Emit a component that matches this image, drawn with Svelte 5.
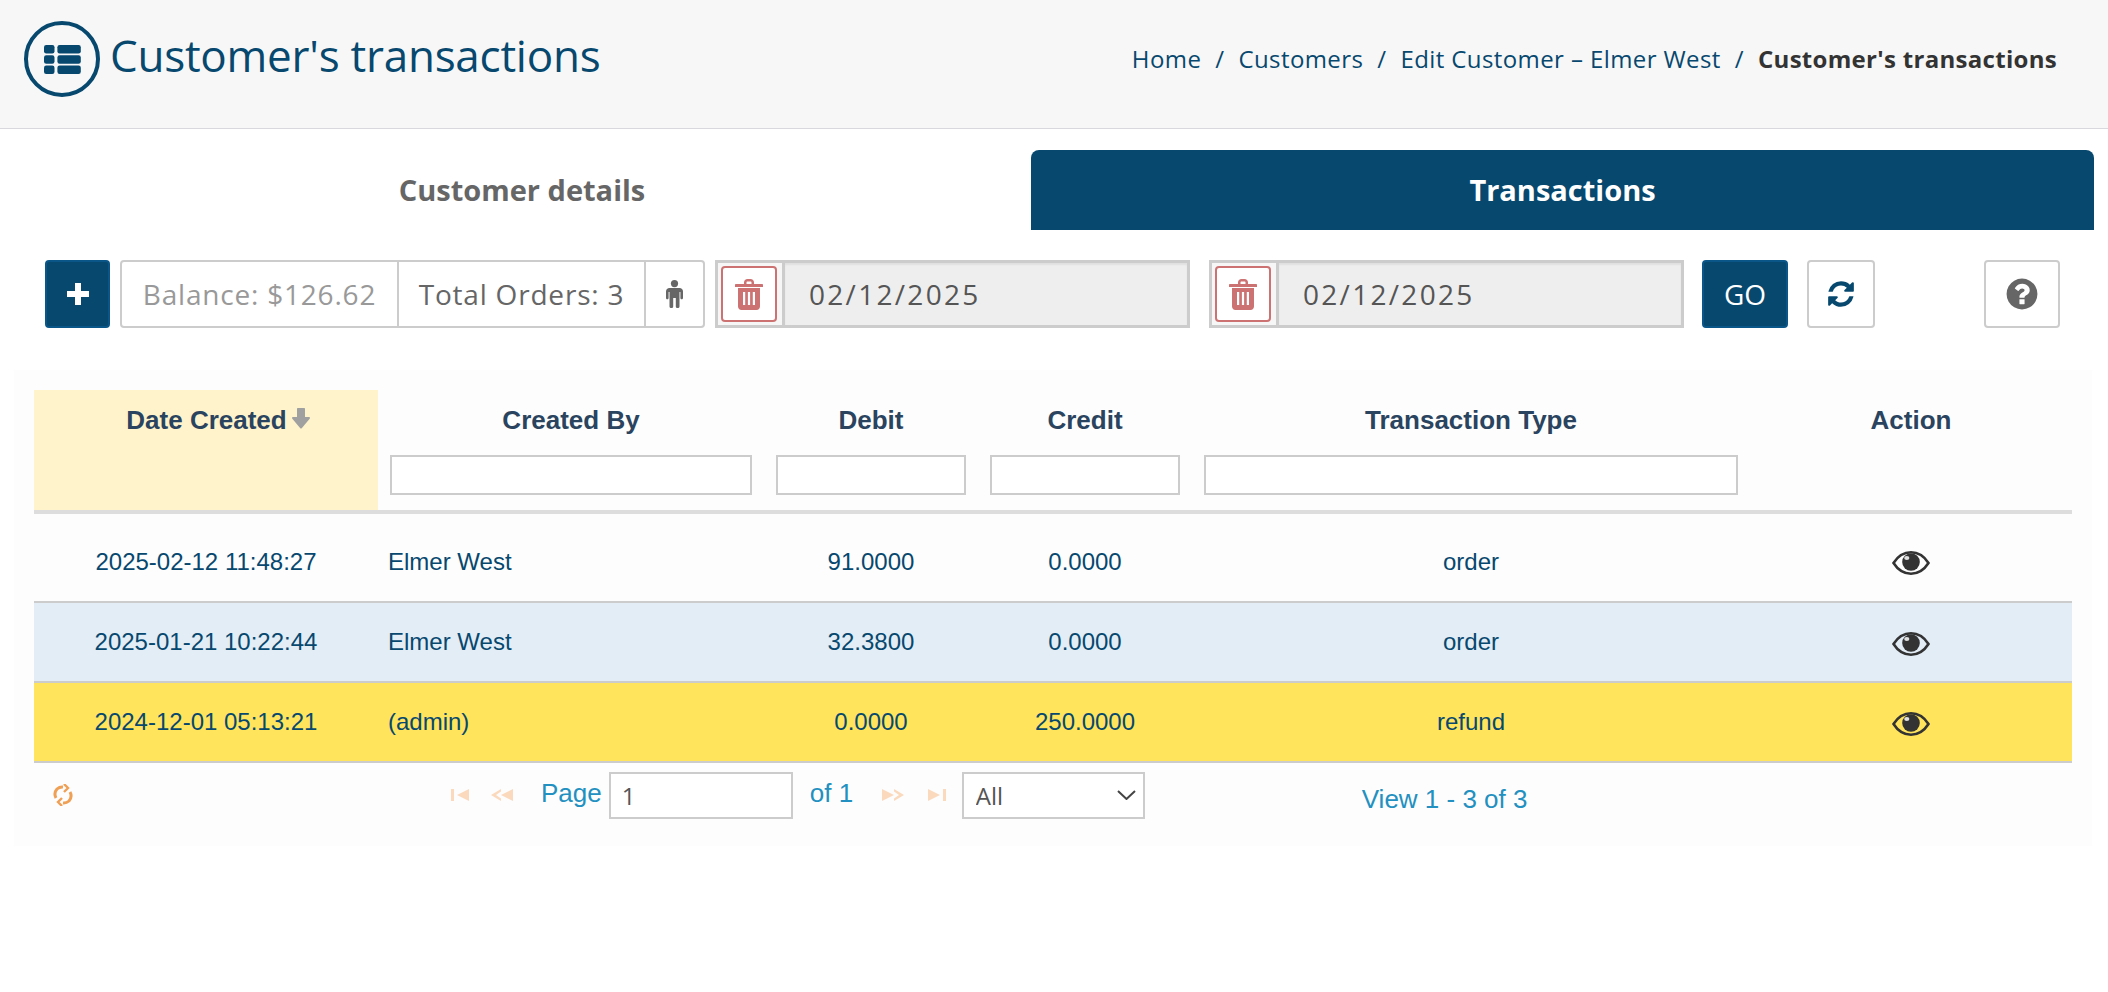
<script>
  const rows = [
    { date: '2025-02-12 11:48:27', by: 'Elmer West', debit: '91.0000', credit: '0.0000', type: 'order', cls: 'first' },
    { date: '2025-01-21 10:22:44', by: 'Elmer West', debit: '32.3800', credit: '0.0000', type: 'order', cls: 'blue' },
    { date: '2024-12-01 05:13:21', by: '(admin)', debit: '0.0000', credit: '250.0000', type: 'refund', cls: 'yellow' }
  ];
  const refresh = 'M1639 1056q0 5-1 7-64 268-268 434.5t-478 166.5q-146 0-282.5-55t-243.5-157l-129 129q-19 19-45 19t-45-19-19-45v-448q0-26 19-45t45-19h448q26 0 45 19t19 45-19 45l-137 137q71 66 161 102t187 36q134 0 250-65t186-179q11-17 53-117 8-23 30-23h192q13 0 22.500 9.500t9.500 22.500zm25-800v448q0 26-19 45t-45 19h-448q-26 0-45-19t-19-45 19-45l138-138q-148-137-349-137-134 0-250 65t-186 179q-11 17-53 117-8 23-30 23h-199q-13 0-22.500-9.500t-9.500-22.500v-7q65-268 270-434.500t480-166.500q146 0 284 55.500t245 156.500l130-129q19-19 45-19t45 19 19 45z';
  const help = 'M1024 1376v-192q0-14-9-23t-23-9h-192q-14 0-23 9t-9 23v192q0 14 9 23t23 9h192q14 0 23-9t9-23zm256-672q0-88-55.500-163t-138.500-116-170-41q-243 0-371 213-15 24 8 42l132 100q7 6 19 6 16 0 25-12 53-68 86-92 34-24 86-24 48 0 85.500 26t37.500 59q0 38-20 61t-68 45q-63 28-115.500 86.500t-52.500 125.500v36q0 14 9 23t23 9h192q14 0 23-9t9-23q0-19 21.500-49.500t54.500-49.500q32-18 49-28.500t46-35 44.500-48 28-60.500 12.500-81zm384 192q0 209-103 385.500t-279.500 279.500-385.500 103-385.500-103-279.500-279.500-103-385.500 103-385.500 279.500-279.500 385.500-103 385.500 103 279.500 279.500 103 385.500z';
</script>

{#snippet trash()}
  <button class="trash" aria-label="Clear date">
    <svg width="28" height="31" viewBox="0 0 28 31">
      <path class="red" fill-rule="evenodd" d="M9 5V3.500C9 1.500 10.500 0 12.500 0h3C17.500 0 19 1.500 19 3.500V5h8c.6 0 1 .4 1 1v2H0V6c0-.6.4-1 1-1zM11.500 5h5V3.500c0-.6-.4-1-1-1h-3c-.6 0-1 .4-1 1z"/>
      <path class="red" fill-rule="evenodd" d="M3 9h22v18.500c0 1.900-1.500 3.500-3.400 3.500H6.400C4.500 31 3 29.400 3 27.500zM8 13v13h2.200V13zM12.900 13v13h2.200V13zM17.800 13v13H20V13z"/>
    </svg>
  </button>
{/snippet}

{#snippet eye()}
  <svg width="38" height="24" viewBox="0 0 38 24" aria-label="View">
    <path d="M1.500 12C6 5 12 1.300 19 1.300S32 5 36.500 12C32 19 26 22.700 19 22.700S6 19 1.500 12Z" fill="none" stroke="#333" stroke-width="2.600"/>
    <circle cx="19" cy="11" r="8.800" fill="#333"/>
    <ellipse cx="14.800" cy="7" rx="2.600" ry="2" fill="#fff" opacity=".85"/>
  </svg>
{/snippet}

<header class="top">
  <div class="title">
    <span class="circle">
      <svg width="37" height="29" viewBox="0 0 37 29">
        <rect x="0" y="0" width="10.500" height="8.400" rx="2.200"/><rect x="13.400" y="0" width="23.400" height="8.400" rx="2.200"/>
        <rect x="0" y="10.300" width="10.500" height="8.400" rx="2.200"/><rect x="13.400" y="10.300" width="23.400" height="8.400" rx="2.200"/>
        <rect x="0" y="20.600" width="10.500" height="8.400" rx="2.200"/><rect x="13.400" y="20.600" width="23.400" height="8.400" rx="2.200"/>
      </svg>
    </span>
    <h1>Customer's transactions</h1>
  </div>
  <nav class="crumbs">
    <a href="#a">Home</a><span>/</span><a href="#b">Customers</a><span>/</span><a href="#c">Edit Customer – Elmer West</a><span>/</span><b>Customer's transactions</b>
  </nav>
</header>

<div class="tabs">
  <div class="tab">Customer details</div>
  <div class="tab active">Transactions</div>
</div>

<div class="toolbar">
  <button class="btn primary plus" aria-label="Add">
    <svg width="22" height="22" viewBox="0 0 22 22"><path d="M8 0h6v8h8v6h-8v8H8v-8H0V8h8z" fill="#fff"/></svg>
  </button>
  <div class="stats">
    <span class="balance">Balance: $126.62</span>
    <span class="orders">Total Orders: 3</span>
    <span class="person">
      <svg width="17" height="28" viewBox="0 0 17 28"><circle cx="8.500" cy="3.600" r="3.600" fill="#666"/><path d="M3.500 8h10C15.500 8 17 9.500 17 11.500v6.500c0 1.800-2.600 1.800-2.600 0v-6h-.9v14.500c0 2-3.700 2-3.700 0V18H7.200v8.500c0 2-3.700 2-3.700 0V12h-.9v6c0 1.800-2.600 1.800-2.600 0v-6.500C0 9.500 1.500 8 3.500 8z" fill="#666"/></svg>
    </span>
  </div>
  <div class="dategroup d1">
    <span class="trashcell">{@render trash()}</span>
    <input class="date" value="02/12/2025" readonly />
  </div>
  <div class="dategroup d2">
    <span class="trashcell">{@render trash()}</span>
    <input class="date" value="02/12/2025" readonly />
  </div>
  <button class="btn primary go">GO</button>
  <button class="btn plain refresh" aria-label="Refresh">
    <svg width="30" height="30" viewBox="0 0 1792 1792"><path d={refresh} fill="#07486f"/></svg>
  </button>
  <button class="btn plain help" aria-label="Help">
    <svg width="36" height="36" viewBox="0 0 1792 1792"><path d={help} fill="#666"/></svg>
  </button>
</div>

<section class="panel">
  <table>
    <colgroup>
      <col class="c1" /><col class="c2" /><col class="c3" /><col class="c3" /><col class="c5" /><col class="c6" />
    </colgroup>
    <thead>
      <tr>
        <th class="sorted">Date Created<svg class="sort" width="18" height="21" viewBox="0 0 18 21"><path d="M5 1c0-.6.4-1 1-1h6c.6 0 1 .4 1 1v8h4c1 0 1.300 1 .7 1.700l-8 9.500c-.4.500-1 .5-1.400 0l-8-9.500C-.3 10 0 9 1 9h4z" fill="#a0a0a0"/></svg></th>
        <th>Created By<input aria-label="Created By" /></th>
        <th>Debit<input aria-label="Debit" /></th>
        <th>Credit<input aria-label="Credit" /></th>
        <th>Transaction Type<input aria-label="Transaction Type" /></th>
        <th>Action</th>
      </tr>
    </thead>
    <tbody>
      {#each rows as r}
        <tr class={r.cls}>
          <td>{r.date}</td>
          <td class="left">{r.by}</td>
          <td>{r.debit}</td>
          <td>{r.credit}</td>
          <td>{r.type}</td>
          <td class="act">{@render eye()}</td>
        </tr>
      {/each}
    </tbody>
  </table>
  <footer class="pager">
    <svg class="reload" width="22" height="22" viewBox="0 0 22 22" fill="none" stroke="#f0a055" stroke-width="3">
      <path d="M4 14a8 8 0 0 1 1-9 8 8 0 0 1 6-2"/><path d="M18 8a8 8 0 0 1-1 9 8 8 0 0 1-6 2"/>
      <path d="M12 0l4 4-4 4" stroke-width="2.400"/><path d="M10 14l-4 4 4 4" stroke-width="2.400"/>
    </svg>
    <svg class="nav first" width="18" height="12" viewBox="0 0 18 12"><path d="M0 0h3v12H0zM18 0v12L6 6z" fill="#fad9bd"/></svg>
    <svg class="nav prev" width="22" height="12" viewBox="0 0 22 12"><path d="M22 0v12L10 6zM10 0v2.500L5 6l5 3.500V12L0 6z" fill="#fad9bd"/></svg>
    <span class="page">Page</span>
    <input class="pagenum" value="1" aria-label="Page number" />
    <span class="of">of 1</span>
    <svg class="nav next" width="22" height="12" viewBox="0 0 22 12"><path d="M0 0v12L12 6zM12 0v2.500L17 6l-5 3.500V12L22 6z" fill="#fad9bd"/></svg>
    <svg class="nav last" width="18" height="12" viewBox="0 0 18 12"><path d="M18 0h-3v12h3zM0 0v12L12 6z" fill="#fad9bd"/></svg>
    <span class="selectwrap">
      <select aria-label="Rows per page"><option>All</option></select>
      <svg class="chev" width="19" height="10" viewBox="0 0 19 10"><path d="M1 1l8.500 8L18 1" fill="none" stroke="#444" stroke-width="2"/></svg>
    </span>
    <span class="view">View 1 - 3 of 3</span>
  </footer>
</section>

<style>
  :global(body) {
    margin: 0;
    background: #fff;
    font-family: "Open Sans", "DejaVu Sans", sans-serif;
  }
  .top {
    height: 118px;
    box-sizing: content-box;
    background: #f7f7f7;
    border-bottom: 1px solid #d8d8de;
    display: flex;
    align-items: center;
    justify-content: space-between;
    padding: 0 51px 10px 24px;
  }
  .title { display: flex; align-items: center; }
  .circle {
    width: 76px;
    height: 76px;
    box-sizing: border-box;
    border: 4px solid #07486f;
    border-radius: 50%;
    display: flex;
    align-items: center;
    justify-content: center;
    margin-right: 10px;
  }
  .circle svg { fill: #07486f; }
  h1 {
    margin: -8px 0 0;
    font-size: 44px;
    font-weight: 400;
    line-height: 56px;
    letter-spacing: -.25px;
    color: #07486f;
  }
  .crumbs {
    display: flex;
    gap: 14px;
    margin-top: -2px;
    font-size: 24px;
    letter-spacing: .4px;
    color: #07486f;
  }
  .crumbs a { color: #07486f; text-decoration: none; }
  .crumbs b { color: #333; font-weight: 700; letter-spacing: .3px; }
  .tabs {
    display: flex;
    margin: 21px 0 0 13px;
    height: 80px;
  }
  .tab {
    width: 1018px;
    box-sizing: border-box;
    padding-bottom: 2px;
    display: flex;
    align-items: center;
    justify-content: center;
    font-size: 29px;
    font-weight: 700;
    color: #666;
  }
  .tab.active {
    width: 1063px;
    background: #07486f;
    color: #fff;
    border-radius: 8px 8px 0 0;
  }
  .toolbar {
    display: flex;
    height: 68px;
    margin-top: 30px;
    padding-left: 45px;
  }
  .btn {
    box-sizing: border-box;
    height: 68px;
    padding: 0;
    border-radius: 4px;
    display: flex;
    align-items: center;
    justify-content: center;
    font-family: inherit;
  }
  .primary { background: #07486f; border: 2px solid #0a5688; color: #fff; }
  .plain { background: #fff; border: 2px solid #ccc; }
  .plus { width: 65px; margin-right: 10px; }
  .stats {
    width: 585px;
    box-sizing: border-box;
    display: flex;
    border: 2px solid #ccc;
    border-radius: 4px;
    font-size: 28px;
    letter-spacing: .8px;
    align-items: stretch;
    margin-right: 10px;
  }
  .stats span { display: flex; align-items: center; justify-content: center; }
  .balance { width: 275px; color: #999; border-right: 2px solid #ccc; }
  .orders { width: 247px; color: #666; border-right: 2px solid #ccc; box-sizing: border-box; }
  .person { flex: 1; }
  .dategroup {
    width: 475px;
    box-sizing: border-box;
    display: flex;
    border: 3px solid #ccc;
    background: #eee;
  }
  .d1 { margin-right: 19px; }
  .d2 { margin-right: 18px; }
  .trashcell {
    width: 67px;
    flex: none;
    box-sizing: border-box;
    background: #f6f6f6;
    border-right: 3px solid #ccc;
    display: flex;
    align-items: center;
    padding-left: 3px;
  }
  .trash {
    width: 56px;
    height: 56px;
    box-sizing: border-box;
    padding: 0;
    border: 2px solid #cd7272;
    border-radius: 4px;
    background: #fff;
    display: flex;
    align-items: center;
    justify-content: center;
  }
  .red { fill: #cd7272; }
  .date {
    flex: 1;
    min-width: 0;
    border: 0;
    outline: 0;
    background: #eee;
    box-shadow: inset 0 2px 2px rgba(0,0,0,.06);
    padding: 0 0 0 24px;
    font: 28px "Open Sans", sans-serif;
    letter-spacing: 2.3px;
    color: #555;
  }
  .go { width: 86px; font-size: 28px; margin-right: 19px; }
  .refresh { width: 68px; margin-right: 109px; }
  .help { width: 76px; }
  .panel {
    margin: 42px 0 0 14px;
    width: 2078px;
    box-sizing: border-box;
    height: 476px;
    padding: 20px 20px 0;
    background: #fdfdfd;
    font-family: "Liberation Sans", Arial, sans-serif;
  }
  table {
    table-layout: fixed;
    width: 2038px;
    border-collapse: separate;
    border-spacing: 0;
    font-size: 24px;
    color: #07486f;
  }
  .c1 { width: 344px; }
  .c2 { width: 386px; }
  .c3 { width: 214px; }
  .c5 { width: 558px; }
  .c6 { width: 322px; }
  th {
    height: 124px;
    box-sizing: border-box;
    vertical-align: top;
    padding: 15px 0 0;
    font-size: 26px;
    line-height: 30px;
    color: #2a445f;
    border-bottom: 4px solid #ddd;
    font-weight: 700;
  }
  th.sorted { background: #fff3cb; padding-left: 24px; }
  .sort { margin: -10px 0 -10px 5px; vertical-align: 10px; }
  th input {
    display: block;
    box-sizing: border-box;
    width: calc(100% - 24px);
    height: 40px;
    margin: 20px 12px 0;
    padding: 0;
    border: 2px solid #ccc;
    background: #fff;
  }
  td {
    height: 80px;
    box-sizing: border-box;
    padding: 0;
    text-align: center;
    border-bottom: 2px solid #ccc;
  }
  td.left { text-align: left; padding-left: 10px; }
  td.act svg { display: block; margin: 4px auto 0; }
  tr.first td { height: 89px; padding-top: 9px; }
  tr.first td.act { padding-top: 7px; }
  tr.blue td { background: #e3edf6; }
  tr.yellow td { background: #ffe45c; }
  .pager {
    display: flex;
    align-items: center;
    height: 82px;
    margin: 0 -20px;
    color: #2290c0;
    font-size: 26px;
  }
  .pager svg { flex: none; }
  .reload { margin-left: 38px; margin-top: -18px; }
  .nav { margin-top: -18px; }
  .first { margin-left: 377px; }
  .prev { margin-left: 22px; }
  .page { margin-left: 28px; margin-top: -22px; }
  .pagenum {
    box-sizing: border-box;
    width: 184px;
    height: 47px;
    margin: -18px 0 0 7px;
    padding: 0 0 0 11px;
    border: 2px solid #ccc;
    background: #fff;
    font: 24px "Open Sans", sans-serif;
    color: #555;
  }
  .of { margin: -22px 0 0 17px; width: 72px; }
  .next { margin-left: 0; }
  .last { margin-left: 24px; }
  .selectwrap {
    position: relative;
    display: block;
    margin: -18px 0 0 16px;
    height: 47px;
  }
  select {
    display: block;
    appearance: none;
    box-sizing: border-box;
    width: 183px;
    height: 47px;
    padding-left: 12px;
    border: 2px solid #ccc;
    border-radius: 0;
    background: #fff;
    font: 24px "Open Sans", sans-serif;
    color: #555;
  }
  .chev { position: absolute; right: 9px; top: 18px; pointer-events: none; }
  .view { margin-left: 217px; margin-top: -9px; }
</style>
